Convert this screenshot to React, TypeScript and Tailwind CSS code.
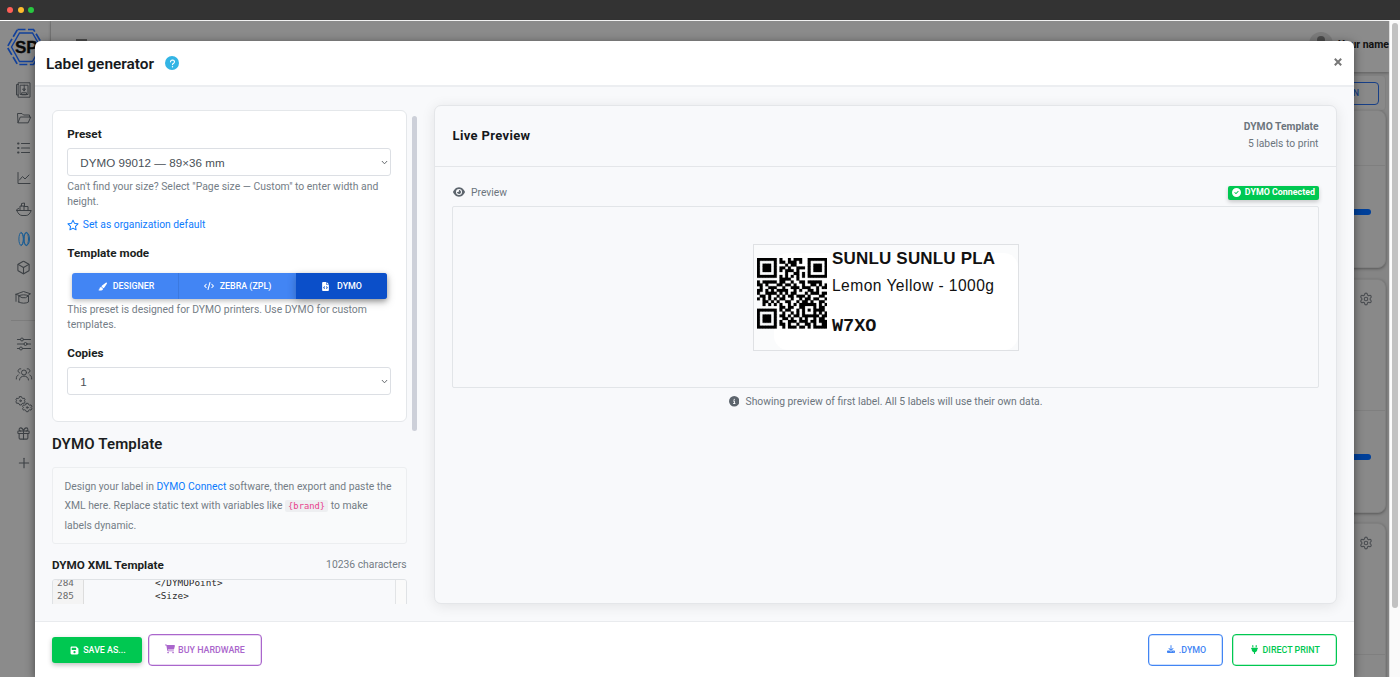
import React from "react";
import {
  FaCartShopping,
  FaCircleCheck,
  FaCircleInfo,
  FaCode,
  FaDownload,
  FaEye,
  FaFileCode,
  FaFloppyDisk,
  FaPaintbrush,
  FaPlug,
  FaQuestion,
  FaRegStar,
} from "react-icons/fa6";
import { Box, Gift, Plus, Settings } from "lucide-react";

const QR_ROWS = [
  "#######.#..#.###..#######",
  "#.....#.##.###.#..#.....#",
  "#.###.#...#.##....#.###.#",
  "#.###.#.##.#..###.#.###.#",
  "#.###.#.#.###.#...#.###.#",
  "#.....#...#..##.#.#.....#",
  "#######.#.#.#.#.#.#######",
  "........####..#..........",
  "#.#####.##..#..##.#####..",
  "##.#...##.##.#..#..##.#.#",
  ".#..###..#..###.###..#.##",
  "##.#.#.####..#.#..##.#...",
  "#..####.#.#.##...#.###.##",
  ".##.#..#.#.##.###.#...##.",
  "#.#.#.#.##..#..#.##.##..#",
  "..##.#.#..##..#.##.#..##.",
  "..#.#.#.#..#.#.######.#.#",
  "........##.##..##...#.##.",
  "#######.#.##..#.#.#.####.",
  "#.....#..#..#.#.#...#.#.#",
  "#.###.#.##.#.##.######.##",
  "#.###.#..##.#..#.#..#.##.",
  "#.###.#.#..###.###.##.###",
  "#.....#.##.#..#..##.#..##",
  "#######..#.###.##.#.#####",
];

const qrModules = QR_ROWS.flatMap((row, y) =>
  row.split("").map((c, x) => (c === "#" ? `M${x} ${y}h1v1h-1z` : "")),
).join("");

const QrCode = () => (
  <svg viewBox="0 0 25 25" className="size-[70.500px]">
    <path d={qrModules} stroke="#000" strokeWidth="0.08" />
  </svg>
);

const Line = ({ children, className = "" }: { children: React.ReactNode; className?: string }) => (
  <svg
    viewBox="0 0 16 16"
    fill="none"
    stroke="currentColor"
    strokeLinecap="round"
    strokeLinejoin="round"
    className={`size-4 shrink-0 ${className}`}
  >
    {children}
  </svg>
);

const Cog = ({ x, y }: { x: number; y: number }) => (
  <g transform={`translate(${x} ${y})`}>
    <path d="M-.9-4.200H.9L1.300-3 2.500-2.300 3.800-2.600 4.600-1 3.800 0 4.600 1 3.800 2.600 2.500 2.300 1.300 3 .9 4.200H-.9L-1.300 3-2.500 2.300-3.800 2.600-4.600 1-3.800 0-4.600-1-3.800-2.600-2.500-2.300-1.300-3z" />
    <circle r=".8" />
  </g>
);

const Sidebar = () => (
  <aside className="flex w-[51px] shrink-0 flex-col border-r border-[#808080] bg-[#8b8b8b] text-[#3d4145]">
    <svg viewBox="0 0 44 40" className="mt-[6px] ml-[5px] h-10 w-11" fill="none">
      <path d="M12.500 2.500H28.500L39 20 28.500 37.500H12.500L2.200 20z" stroke="#12419b" strokeWidth="1.700" strokeDasharray="8 2.500" />
      <path d="M14.500 6H27.500L35.500 20 27.500 34.500H14.500L6.500 20z" stroke="#12419b" strokeWidth="1.400" />
      <text x="10" y="25.500" fontFamily="Liberation Sans, sans-serif" fontWeight="700" fontSize="17" fill="#0a0a0a" stroke="#0a0a0a" strokeWidth="0.300">SP</text>
    </svg>
    <div className="flex flex-col pl-[15px]">
      <Line className="mt-[15px] w-[17px]">
        <path d="M3 .8h11.500v14.400H3zM3 2.500H1v10.500h2M5 3.200h7.500v9.300H5zM8.700 3.200v4.300M7.500 7h2.500l-1.200 1.800zM6.500 10.800h4.500v2H6.500z" />
      </Line>
      <div className="flex flex-col pl-px">
        <Line className="mt-3">
          <path d="M2 12.500l-.5-9h4.500l1.500 1.500h6v2M2 12.500l2.300-5.500h10.500l-2.500 5.500z" />
        </Line>
        <Line className="mt-[14px]">
          <path d="M2 3.500h.6M2 8h.6M2 12.500h.6" strokeWidth="1.800" />
          <path d="M5.500 3.500h8M5.500 8h8M5.500 12.500h8" strokeWidth="1.200" />
        </Line>
        <Line className="mt-[14px]">
          <path d="M2 2.500v11h12M3.500 10l3-3.500 2.500 2.500 4-4" />
        </Line>
        <Line className="mt-[15px]">
          <path d="M.8 9.500h14.400c-1 3-3 5-5 5H6c-2 0-4.200-2-5.200-5zM4 9V5h4v4M8 5.500h4V9M5.500 5V2.500L8.500 2v3M.8 8.500l2-1" />
        </Line>
        <Line className="mt-[14px] text-[#1d5f96]">
          <ellipse cx="5.200" cy="8" rx="2.300" ry="6.500" />
          <ellipse cx="10.200" cy="8" rx="2.300" ry="6.500" />
          <path d="M5.200 1.500c3 1 3 12 0 13M10.200 1.500c-3 1-3 12 0 13M10.200 1.500c4.500-.5 4.500 13.500 0 13" />
        </Line>
      </div>
      <Box className="mt-[13px] ml-px size-[15px]" strokeWidth={1.700} />
      <Line className="mt-[14px]">
        <path d="M1 5.300L8.500 2.500l7 2.300-2 1.200M1 5.300v7M1 5.300l2.800 1M3.800 13V6.800c2.500-1.300 7.200-1.300 9.700 0V13c-2.500 1.600-7.200 1.600-9.700 0zM4 7l3 1.700h3.500L13.300 7" />
      </Line>
      <div className="mt-[15px] -ml-1 h-px bg-[#7d7d7d]" />
      <div className="flex flex-col pl-px">
        <Line className="mt-[15px]">
          <path d="M1.500 3.500h3M7.500 3.500h7M1.500 8h6.500M11 8h3.500M1.500 12.500h2M6.500 12.500h8" strokeWidth="1.200" />
          <circle cx="6" cy="3.500" r="1.500" />
          <circle cx="9.500" cy="8" r="1.500" />
          <circle cx="5" cy="12.500" r="1.500" />
        </Line>
        <Line className="mt-[14px] overflow-visible">
          <circle cx="8" cy="6.500" r="2.500" />
          <path d="M3.500 14c0-5.300 9-5.300 9 0M3.800 7C1 6.500 1.500 2.200 4.800 2.800M12.200 7c2.800-.5 2.300-4.800-1-4.200M.3 13c0-2.500.7-3.600 1.900-4M15.700 13c0-2.500-.7-3.600-1.900-4" />
        </Line>
        <Line className="mt-[14px] overflow-visible">
          <Cog x={4.500} y={4.800} />
          <Cog x={11.200} y={11.500} />
        </Line>
        <Gift className="mt-[14px] size-[15px]" strokeWidth={1.700} />
        <Plus className="mt-[14px] size-4" strokeWidth={1.700} />
      </div>
    </div>
  </aside>
);

const UsageCard = ({ gear, className }: { gear?: boolean; className: string }) => (
  <div className={`flex flex-col items-end rounded-lg border border-[#808080] bg-[#898989] pr-[14px] shadow-[0_1px_3px_rgba(0,0,0,0.35)] ${className}`}>
    {gear && <Settings className="mt-3 -mr-[2px] size-[14px] text-[#4b4e52]" strokeWidth={1.900} />}
    <div className="-mr-[14px] mt-auto h-px w-[400px] bg-[#7f7f7f]" />
    <div className="mt-[43px] mb-[52px] h-[6px] w-[300px] rounded-sm bg-[#00409a]" />
  </div>
);

const Page = () => (
  <div className="flex min-h-0 flex-1">
    <Sidebar />
    <div className="flex min-w-0 flex-1 flex-col bg-[#858585]">
      <header className="flex h-[51px] shrink-0 justify-between bg-[#8b8b8b] shadow-[0_1px_3px_rgba(0,0,0,0.3)]">
        <div className="mt-[18px] ml-[25px] h-[2px] w-[11px] bg-[#4a4a4a]" />
        <div className="flex">
          <div className="mt-[11px] flex size-6 flex-col items-center overflow-hidden rounded-full bg-[#7b7b7b]">
            <div className="mt-1 size-2 shrink-0 rounded-full bg-[#4b4b4b]" />
            <div className="mt-[2px] h-3 w-4 shrink-0 rounded-full bg-[#4b4b4b]" />
          </div>
          <div className="mt-4 ml-[5px] text-[10.500px] leading-[15px] font-bold whitespace-nowrap text-[#111]">Your name</div>
        </div>
      </header>
      <div className="mr-[3px] flex flex-1 flex-col">
        <div className="mt-[3px] flex h-9 items-center justify-end rounded border border-[#808080] bg-[#898989]">
          <div className="mr-[6px] flex h-[23px] w-[120px] items-center justify-end rounded border-[1.500px] border-[#173f87] pr-[19px] text-[8.500px] font-medium text-[#173f87]">OPEN</div>
        </div>
        <UsageCard className="-mt-[1px] h-[158px]" />
        <UsageCard gear className="mt-[11px] h-[234px]" />
        <UsageCard gear className="mt-[10px] h-[234px]" />
      </div>
    </div>
    <div className="flex w-[11px] shrink-0 border-l border-[#ddd] bg-[#fafafa] pt-[2px] pl-[2px]">
      <div className="h-[585px] w-[6px] rounded-full bg-[#c1c1c1]" />
    </div>
  </div>
);

const Select = ({ value, className = "" }: { value: string; className?: string }) => (
  <div className={`flex h-7 items-center justify-between rounded-[3px] border border-[#dcdfe4] bg-white pr-[2px] pl-3 text-[#495057] ${className}`}>
    <span className="mt-px font-['Liberation_Sans',sans-serif] text-[11.600px] leading-4 tracking-[0.050px]">{value}</span>
    <svg viewBox="0 0 8 5" className="h-[5px] w-[7px]" fill="none" stroke="#55595e" strokeWidth="1">
      <path d="M1 .8L4 4 7 .8" />
    </svg>
  </div>
);

const LABEL = "text-[11.700px] leading-4 font-bold text-[#1b1e21]";
const HINT = "text-[10.400px] leading-[15.400px] whitespace-nowrap text-[#747d86]";

const LabelSettings = () => (
  <div className="flex h-[517px] flex-col overflow-hidden pt-[23px]">
    <div className="flex">
      <section className="flex h-[312px] w-[354.500px] flex-col rounded-[6px] border border-[#e4e7ea] bg-white px-[14.300px] pt-[15px]">
        <div className={LABEL}>Preset</div>
        <Select value="DYMO 99012 — 89×36 mm" className="mt-[6.400px]" />
        <div className={`mt-[2.600px] ${HINT}`}>
          Can't find your size? Select "Page size — Custom" to enter width and
          <br />
          height.
        </div>
        <div className="mt-[7px] flex h-4 items-center gap-[3.500px] text-[10.300px] text-[#0d7bfd]">
          <FaRegStar className="size-[12px]" />
          Set as organization default
        </div>
        <div className={`mt-[12.400px] ${LABEL}`}>Template mode</div>
        <div className="mr-1 ml-[4.500px] mt-[11.600px] flex h-[26px] rounded-[3px] bg-[#4285f4] text-[8.900px] font-medium text-white shadow-[0_2px_5px_rgba(0,0,0,0.25)]">
          <div className="flex w-[107.500px] items-center justify-center gap-[6px] border-r border-[#3b79df] pt-px pl-[2px]">
            <FaPaintbrush className="size-[9px]" />
            DESIGNER
          </div>
          <div className="flex w-[116.500px] items-center justify-center gap-[6px] pt-px">
            <FaCode className="size-[10px]" />
            ZEBRA (ZPL)
          </div>
          <div className="flex flex-1 items-center justify-center gap-[7px] rounded-r-[3px] bg-[#0b4fc9] pt-px shadow-[0_3px_8px_rgba(0,0,0,0.25)]">
            <FaFileCode className="size-[9px]" />
            DYMO
          </div>
        </div>
        <div className={`mt-[2.800px] ${HINT}`}>
          This preset is designed for DYMO printers. Use DYMO for custom
          <br />
          templates.
        </div>
        <div className={`mt-[12.500px] ${LABEL}`}>Copies</div>
        <Select value="1" className="mt-[6.500px]" />
      </section>
      <div className="mt-[6px] ml-[5.500px] h-[315px] w-[5px] rounded-full bg-[#cdd0d9]" />
    </div>
    <h2 className="mt-[3px] text-[15px] leading-5 font-semibold tracking-[0.150px] text-[#1b1e21]">DYMO Template</h2>
    <div className="mt-[13px] h-[77px] w-[354.500px] shrink-0 rounded-[3px] border border-[#eceef0] bg-[#f9fafb] pt-[9px] pl-[11.500px] text-[10.350px] leading-[19.300px] whitespace-nowrap text-[#747d86]">
      <div className="h-[19.300px]">
        Design your label in <span className="text-[#0d7bfd]">DYMO Connect</span> software, then export and paste the
      </div>
      <div className="h-[19.300px]">
        XML here. Replace static text with variables like{" "}
        <code className="rounded-[2px] bg-[#eeeff1] px-[3px] py-[1px] font-['DejaVu_Sans_Mono',monospace] text-[8.800px] leading-3 text-[#e83e8c]">{"{brand}"}</code>{" "}
        to make
      </div>
      <div className="h-[19.300px]">labels dynamic.</div>
    </div>
    <div className="mt-[13px] flex w-[354.500px] justify-between">
      <span className={LABEL}>DYMO XML Template</span>
      <span className="text-[10.350px] leading-4 text-[#747d86]">10236 characters</span>
    </div>
    <div className="mt-[6px] flex h-[60px] w-[354.500px] shrink-0 overflow-hidden rounded-t-[3px] border border-[#dfe2e5] font-['DejaVu_Sans_Mono',monospace] text-[9.350px] leading-[13px]">
      <div className="w-[31px] border-r border-[#dddddd] bg-[#f4f4f4] pl-1 text-[#6a6a6a]">
        <div className="-mt-[4px]">284</div>
        <div>285</div>
      </div>
      <div className="flex-1 pl-[71px] text-[#2b2b2b]">
        <div className="-mt-[4px]">{"</DYMOPoint>"}</div>
        <div>{"<Size>"}</div>
      </div>
      <div className="w-[11px] border-l border-[#e2e4e6] bg-[#fafafa]" />
    </div>
  </div>
);

const Preview = () => (
  <section className="mt-[18px] ml-[17px] flex h-[499px] w-[903px] flex-col rounded-[7px] border border-[#e4e6e9] bg-[#f8f9fb] shadow-[0_2px_14px_rgba(0,0,0,0.09)]">
    <div className="flex h-[61px] items-center justify-between border-b border-[#e4e6e9] px-[17.500px]">
      <h3 className="text-[13px] font-bold tracking-[0.350px] text-[#15181b]">Live Preview</h3>
      <div className="text-right text-[10.300px] leading-[16.500px] text-[#6c757d]">
        <div className="font-bold">DYMO Template</div>
        <div className="pt-[0.500px]">5 labels to print</div>
      </div>
    </div>
    <div className="mx-[17px] mt-[17px] flex h-4 items-center justify-between">
      <div className="flex items-center gap-[6px] pl-px text-[10.300px] text-[#6c757d]">
        <FaEye className="size-3 text-[#5d656d]" />
        <span className="pt-px">Preview</span>
      </div>
      <div className="mt-px flex h-[14px] items-center gap-1 rounded-[2px] bg-[#00c851] px-1 text-[8.900px] font-bold text-white shadow-[0_2px_4px_rgba(0,0,0,0.2)]">
        <FaCircleCheck className="-mt-px size-[9px]" />
        DYMO Connected
      </div>
    </div>
    <div className="mx-[17px] mt-[6px] flex h-[182px] justify-center rounded-[2px] border border-[#e2e5e8]">
      <div className="relative mt-[36.500px] h-[107px] w-[266px] border border-[#dfe1e4] bg-[#fafbfc]">
        <div className="absolute top-2 right-0 bottom-0 left-5 rounded-[14px] bg-white" />
        <div className="relative flex">
          <div className="mt-[13.500px] ml-[3px] shrink-0">
            <QrCode />
          </div>
          <div className="ml-[5px] flex flex-col whitespace-nowrap text-[#111]">
            <div className="mt-[4px] font-['Liberation_Sans',sans-serif] text-[17px] leading-5 font-bold tracking-[0.180px]">SUNLU SUNLU PLA</div>
            <div className="mt-[7px] font-['Liberation_Sans',sans-serif] text-[15.600px] leading-5 tracking-[0.450px]">Lemon Yellow - 1000g</div>
            <div className="mt-[21px] font-['Liberation_Mono',monospace] text-[18.500px] leading-5 font-bold">W7XO</div>
          </div>
        </div>
      </div>
    </div>
    <div className="mt-[5.500px] flex items-center justify-center gap-[6.500px] text-[10.320px] leading-4 text-[#6c757d]">
      <FaCircleInfo className="size-[10.500px] text-[#5d656d]" />
      Showing preview of first label. All 5 labels will use their own data.
    </div>
  </section>
);

const Modal = () => (
  <div className="absolute top-[41px] left-[35px] flex h-[636px] w-[1319px] flex-col rounded-t-[6px] bg-white shadow-[0_2px_10px_rgba(0,0,0,0.5)]">
    <header className="flex h-[46px] shrink-0 items-center justify-between border-b-2 border-[#eceef1] pr-3 pl-[11px]">
      <div className="flex items-center gap-[11px]">
        <h1 className="mt-px text-[15.400px] leading-5 font-semibold text-[#16191c]">Label generator</h1>
        <span className="flex size-[14px] items-center justify-center rounded-full bg-[#33b5e5] text-white">
          <FaQuestion className="size-[9px]" />
        </span>
      </div>
      <svg viewBox="0 0 8 8" className="mt-[-3px] size-2" stroke="#777" strokeWidth="2">
        <path d="M.8.8l6.400 6.400M7.200.8L.8 7.200" />
      </svg>
    </header>
    <div className="flex h-[534px] shrink-0 overflow-hidden bg-[#f8f9fb] pl-[17px]">
      <LabelSettings />
      <Preview />
    </div>
    <footer className="flex flex-1 items-center justify-between border-t border-[#e9ebee] pr-[17px] pl-[17px] text-[8.900px] font-medium">
      <div className="flex items-center gap-[6px]">
        <div className="flex h-[26px] w-[90px] items-center justify-center gap-1 rounded-[3px] bg-[#00c851] pt-[2px] pl-[2px] text-white shadow-[0_2px_5px_rgba(0,0,0,0.25)]">
          <FaFloppyDisk className="-mt-px size-[9px]" />
          SAVE AS...
        </div>
        <div className="flex h-8 w-[114px] items-center justify-center gap-[3px] rounded-[4px] border-[1.500px] border-[#aa66cc] pt-[2px] text-[#aa66cc] ring-[0.500px] ring-[#aa66cc]/50 ring-inset">
          <FaCartShopping className="-mt-[3px] size-[10px]" />
          BUY HARDWARE
        </div>
      </div>
      <div className="flex items-center gap-[9px]">
        <div className="flex h-8 w-[75px] items-center justify-center gap-1 rounded-[4px] border-[1.500px] border-[#4285f4] pt-[2px] pl-[2px] text-[#4285f4] ring-[0.500px] ring-[#4285f4]/50 ring-inset">
          <FaDownload className="-mt-[3px] size-2" />
          .DYMO
        </div>
        <div className="flex h-8 w-[105px] items-center justify-center gap-[3.500px] rounded-[4px] border-[1.500px] border-[#00c851] pt-[2px] pl-px text-[#00c851] ring-[0.500px] ring-[#00c851]/50 ring-inset">
          <FaPlug className="-mt-[3px] size-[9px]" />
          DIRECT PRINT
        </div>
      </div>
    </footer>
  </div>
);

export default function App() {
  return (
    <div className="relative flex h-[677px] w-[1400px] flex-col overflow-hidden bg-white font-[Roboto,sans-serif]">
      <div className="mb-px flex h-5 shrink-0 items-center gap-[4.500px] bg-[#333] pl-[7px]">
        <div className="size-[6px] rounded-full bg-[#ff5f57]" />
        <div className="size-[6px] rounded-full bg-[#febc2e]" />
        <div className="size-[6px] rounded-full bg-[#28c840]" />
      </div>
      <Page />
      <Modal />
    </div>
  );
}
